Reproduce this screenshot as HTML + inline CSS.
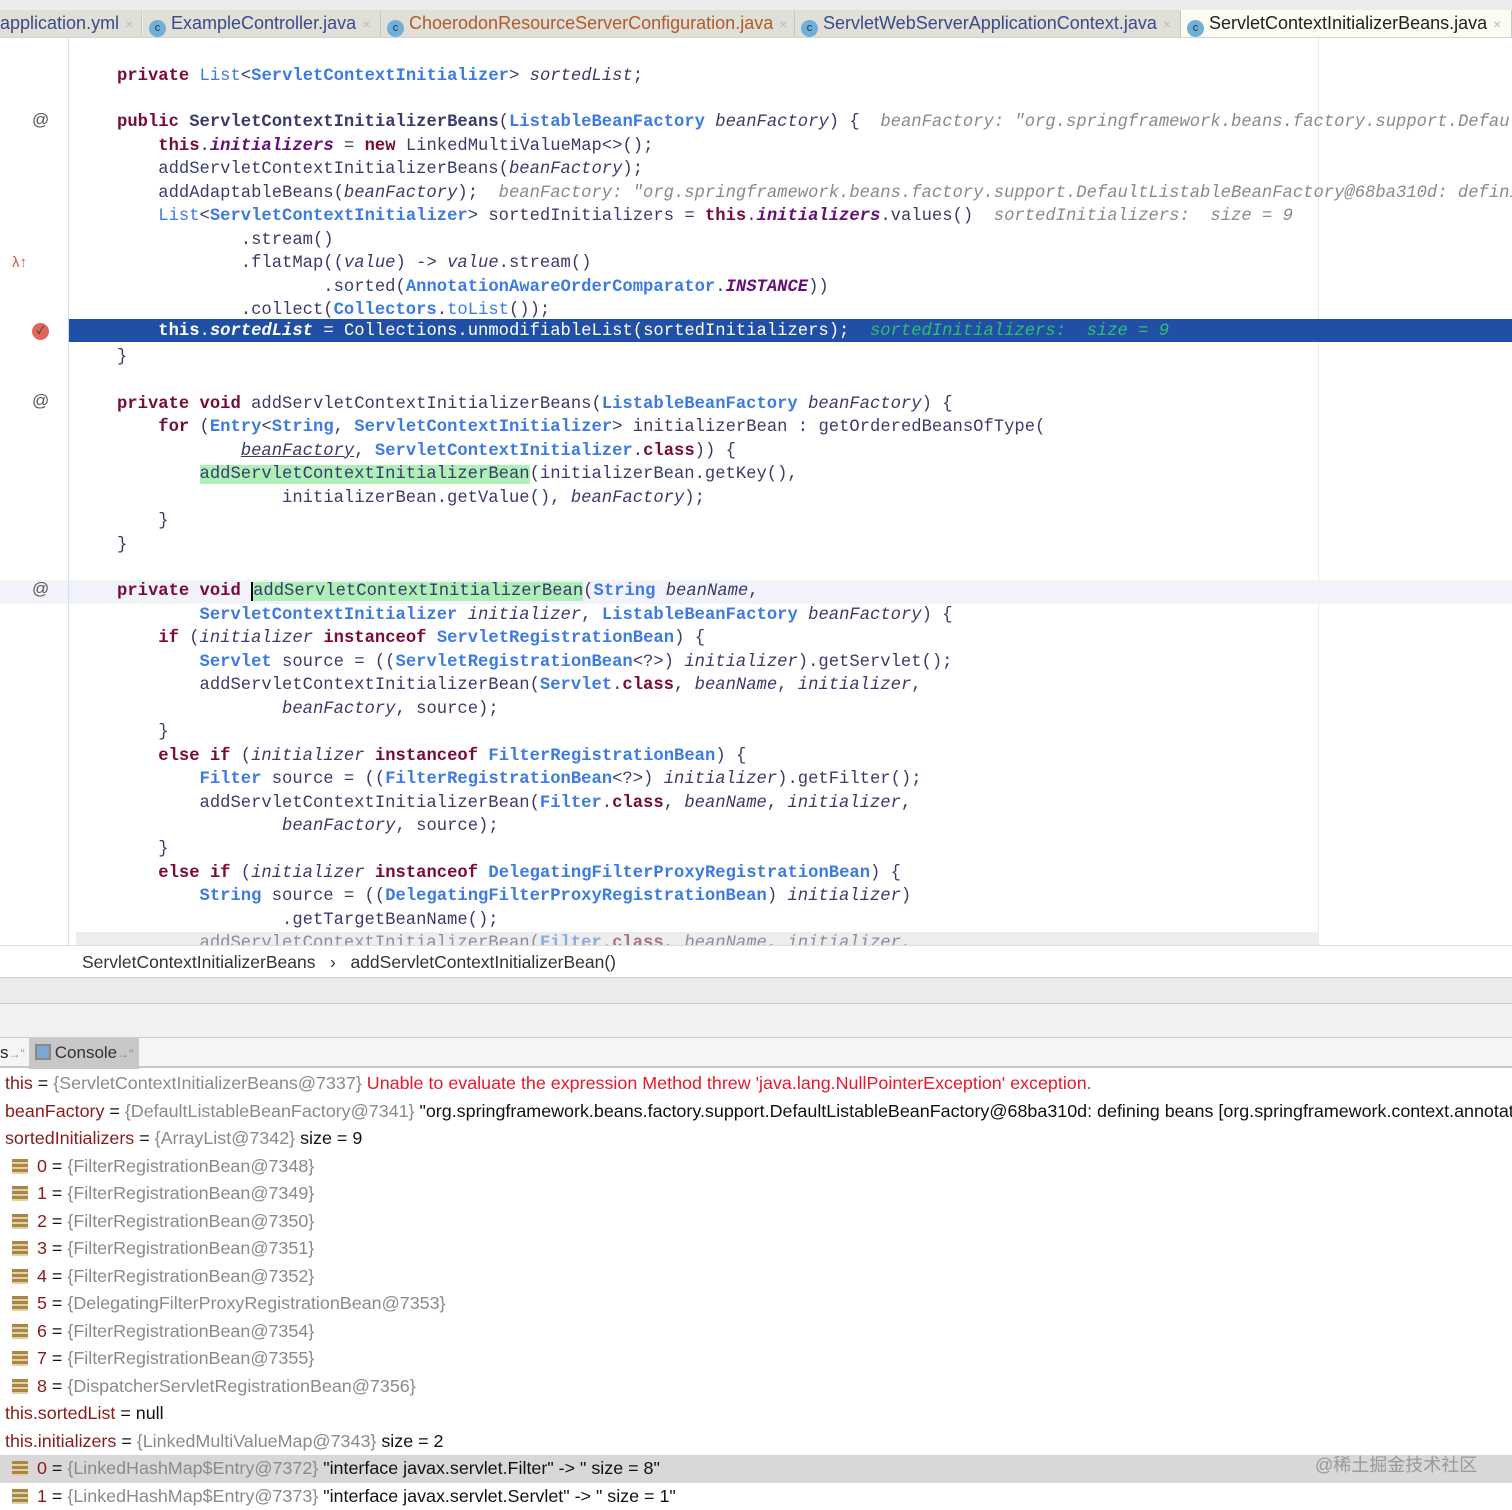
<!DOCTYPE html>
<html><head><meta charset="utf-8"><style>
*{margin:0;padding:0;box-sizing:border-box}
body{width:1512px;height:1510px;overflow:hidden;background:#fff;position:relative;font-family:"Liberation Sans","Noto Sans CJK SC",sans-serif}
.tabs{position:absolute;left:0;top:0;width:1512px;height:38px;background:#ececec;border-bottom:2px solid #d4d4d4}
.tab{position:absolute;top:10px;height:27px;background:#e0e0d8;border-right:1px solid #c8c8c8;font-size:18px;line-height:26px;color:#3a4a8a;white-space:nowrap;padding-left:6px}
.tab .c{display:inline-block;width:17px;height:17px;border-radius:50%;background:#6fb0d8;color:#234;font-size:11px;line-height:17px;text-align:center;vertical-align:-2px;margin-right:5px}
.tab .x{color:#bbb;font-size:14px;margin-left:6px}
.code{position:absolute;left:0;top:38px;width:1512px;height:907px;overflow:hidden;background:#fff}
.gut{position:absolute;left:68px;top:0;width:1px;height:907px;background:#cfe0f0}
.rm{position:absolute;left:1318px;top:0;width:1px;height:907px;background:#ececec}
.ln{position:absolute;left:0;width:1512px;height:23.45px;font-family:"Liberation Mono",monospace;font-size:17.2px;line-height:23.45px;white-space:pre;color:#3b3b6b;padding-left:117px;margin-top:2px}
.k{color:#7a0a3a;font-weight:bold}
.t{color:#3d7be0}
.tb{color:#3d7be0;font-weight:bold}
.i{font-style:italic}
.f{color:#660e7a;font-weight:bold;font-style:italic}
.g{color:#8a8a8a;font-style:italic}
.gr{color:#2fbf6f;font-style:italic}
.hl{background:#214fa5;color:#fff}
.hl .k,.hl .f{color:#fff}
.cur{background:#f2f2fa}
.mk{background:#aef0b8}
.at{position:absolute;left:32px;font-size:17px;color:#555}
.bc{position:absolute;left:0;top:945px;width:1512px;height:32px;background:#fff;border-top:1px solid #ddd;font-size:17.5px;color:#333;line-height:32px;padding-left:82px}
.band1{position:absolute;left:0;top:977px;width:1512px;height:27px;background:#ebebeb;border-top:1px solid #ccc;border-bottom:1px solid #ccc}
.band2{position:absolute;left:0;top:1004px;width:1512px;height:34px;background:#f2f2f2;border-bottom:1px solid #ccc}
.tbar{position:absolute;left:0;top:1038px;width:1512px;height:30px;background:#f5f5f5;border-bottom:2px solid #c8c8c8;font-size:17px;line-height:30px}
.var{position:absolute;left:0;width:1512px;height:27.5px;font-size:17.9px;line-height:27.5px;color:#111;white-space:nowrap}
.n{color:#8b1a1a}
.v{color:#8a8a8a}
.ic{display:inline-block;width:16px;height:15px;vertical-align:-2px;margin:0 9px 0 12px;background:repeating-linear-gradient(#a8864a 0 3px,#e2d0a0 3px 5px)}
</style></head><body>
<div class="tabs">
<div class="tab" style="left:-6px;width:148px;color:#3a4a8a">application.yml<span class="x">×</span></div>
<div class="tab" style="left:143px;width:238px"><span class="c">c</span>ExampleController.java<span class="x">×</span></div>
<div class="tab" style="left:381px;width:414px;color:#b25a2a"><span class="c">c</span>ChoerodonResourceServerConfiguration.java<span class="x">×</span></div>
<div class="tab" style="left:795px;width:386px"><span class="c">c</span>ServletWebServerApplicationContext.java<span class="x">×</span></div>
<div class="tab" style="left:1181px;width:331px;background:#fcfcf2;color:#222"><span class="c">c</span>ServletContextInitializerBeans.java<span class="x">×</span></div>
</div>
<div class="code">
<div class="rm"></div>
<div class="ln" style="top:24.5px"><span class="k">private</span> <span class="t">List</span>&lt;<span class="tb">ServletContextInitializer</span>&gt; <span class="i">sortedList</span>;</div>
<div class="ln" style="top:71.4px"><span class="k">public</span> <b>ServletContextInitializerBeans</b>(<span class="tb">ListableBeanFactory</span> <span class="i">beanFactory</span>) {  <span class="g">beanFactory: "org.springframework.beans.factory.support.DefaultListableBeanFactory@68ba310d</span></div>
<div class="ln" style="top:94.9px">    <span class="k">this</span>.<span class="f">initializers</span> = <span class="k">new</span> LinkedMultiValueMap&lt;&gt;();</div>
<div class="ln" style="top:118.3px">    addServletContextInitializerBeans(<span class="i">beanFactory</span>);</div>
<div class="ln" style="top:141.8px">    addAdaptableBeans(<span class="i">beanFactory</span>);  <span class="g">beanFactory: "org.springframework.beans.factory.support.DefaultListableBeanFactory@68ba310d: defining</span></div>
<div class="ln" style="top:165.2px">    <span class="t">List</span>&lt;<span class="tb">ServletContextInitializer</span>&gt; sortedInitializers = <span class="k">this</span>.<span class="f">initializers</span>.values()  <span class="g">sortedInitializers:  size = 9</span></div>
<div class="ln" style="top:188.7px">            .stream()</div>
<div class="ln" style="top:212.1px">            .flatMap((<span class="i">value</span>) -&gt; <span class="i">value</span>.stream()</div>
<div class="ln" style="top:235.6px">                    .sorted(<span class="tb">AnnotationAwareOrderComparator</span>.<span class="f">INSTANCE</span>))</div>
<div class="ln" style="top:259px">            .collect(<span class="tb">Collectors</span>.<span class="t">toList</span>());</div>
<div class="ln hl" style="top:280.5px;left:68px;padding-left:49px;margin-top:0;padding-top:2px;height:23.45px;line-height:21.45px">    <span class="k">this</span>.<span class="f">sortedList</span> = Collections.unmodifiableList(sortedInitializers);  <span class="gr">sortedInitializers:  size = 9</span></div>
<div class="ln" style="top:305.9px">}</div>
<div class="ln" style="top:352.8px"><span class="k">private void</span> addServletContextInitializerBeans(<span class="tb">ListableBeanFactory</span> <span class="i">beanFactory</span>) {</div>
<div class="ln" style="top:376.3px">    <span class="k">for</span> (<span class="tb">Entry</span>&lt;<span class="tb">String</span>, <span class="tb">ServletContextInitializer</span>&gt; initializerBean : getOrderedBeansOfType(</div>
<div class="ln" style="top:399.7px">            <span class="i" style="text-decoration:underline">beanFactory</span>, <span class="tb">ServletContextInitializer</span>.<span class="k">class</span>)) {</div>
<div class="ln" style="top:423.2px">        <span class="mk">addServletContextInitializerBean</span>(initializerBean.getKey(),</div>
<div class="ln" style="top:446.6px">                initializerBean.getValue(), <span class="i">beanFactory</span>);</div>
<div class="ln" style="top:470.1px">    }</div>
<div class="ln" style="top:493.5px">}</div>
<div class="ln cur" style="top:540.4px"><span class="k">private void</span> <span class="mk" style="border-left:2px solid #000">addServletContextInitializerBean</span>(<span class="tb">String</span> <span class="i">beanName</span>,</div>
<div class="ln" style="top:563.9px">        <span class="tb">ServletContextInitializer</span> <span class="i">initializer</span>, <span class="tb">ListableBeanFactory</span> <span class="i">beanFactory</span>) {</div>
<div class="ln" style="top:587.3px">    <span class="k">if</span> (<span class="i">initializer</span> <span class="k">instanceof</span> <span class="tb">ServletRegistrationBean</span>) {</div>
<div class="ln" style="top:610.8px">        <span class="tb">Servlet</span> source = ((<span class="tb">ServletRegistrationBean</span>&lt;?&gt;) <span class="i">initializer</span>).getServlet();</div>
<div class="ln" style="top:634.2px">        addServletContextInitializerBean(<span class="tb">Servlet</span>.<span class="k">class</span>, <span class="i">beanName</span>, <span class="i">initializer</span>,</div>
<div class="ln" style="top:657.7px">                <span class="i">beanFactory</span>, source);</div>
<div class="ln" style="top:681.1px">    }</div>
<div class="ln" style="top:704.6px">    <span class="k">else if</span> (<span class="i">initializer</span> <span class="k">instanceof</span> <span class="tb">FilterRegistrationBean</span>) {</div>
<div class="ln" style="top:728px">        <span class="tb">Filter</span> source = ((<span class="tb">FilterRegistrationBean</span>&lt;?&gt;) <span class="i">initializer</span>).getFilter();</div>
<div class="ln" style="top:751.5px">        addServletContextInitializerBean(<span class="tb">Filter</span>.<span class="k">class</span>, <span class="i">beanName</span>, <span class="i">initializer</span>,</div>
<div class="ln" style="top:774.9px">                <span class="i">beanFactory</span>, source);</div>
<div class="ln" style="top:798.4px">    }</div>
<div class="ln" style="top:821.8px">    <span class="k">else if</span> (<span class="i">initializer</span> <span class="k">instanceof</span> <span class="tb">DelegatingFilterProxyRegistrationBean</span>) {</div>
<div class="ln" style="top:845.3px">        <span class="tb">String</span> source = ((<span class="tb">DelegatingFilterProxyRegistrationBean</span>) <span class="i">initializer</span>)</div>
<div class="ln" style="top:868.7px">                .getTargetBeanName();</div>
<div class="ln" style="top:892.2px">        addServletContextInitializerBean(<span class="tb">Filter</span>.<span class="k">class</span>, <span class="i">beanName</span>, <span class="i">initializer</span>,</div>
<div style="position:absolute;left:76px;top:894px;width:1242px;height:13px;background:rgba(220,220,220,.5)"></div>
<div class="gut"></div>
<div class="at" style="top:72px">@</div>
<div class="at" style="top:353px">@</div>
<div class="at" style="top:541px">@</div>
<div style="position:absolute;left:12px;top:216px;color:#d9534f;font-size:15px">λ↑</div>
<div style="position:absolute;left:32px;top:285px;width:17px;height:17px;border-radius:50%;background:#e0665a;color:#333;font-size:11px;text-align:center;line-height:17px">✓</div>
</div>
<div class="bc">ServletContextInitializerBeans &nbsp;&nbsp;›&nbsp;&nbsp; addServletContextInitializerBean()</div>
<div class="band1"></div>
<div class="band2"></div>
<div class="tbar"><span style="color:#222">s</span><span style="color:#999;font-size:12px">→"</span><span style="display:inline-block;background:#c8c8c8;padding:0 6px;margin-left:4px;color:#333"><span style="display:inline-block;width:16px;height:16px;background:#7aa8d0;border:2px solid #888;vertical-align:-2px;margin-right:4px"></span>Console<span style="color:#888;font-size:12px">→"</span></span></div>
<div class="var" style="top:1070px">&nbsp;<span class="n">this</span> = <span class="v">{ServletContextInitializerBeans@7337}</span> <span style="color:#e8182a">Unable to evaluate the expression Method threw 'java.lang.NullPointerException' exception.</span></div>
<div class="var" style="top:1097.5px">&nbsp;<span class="n">beanFactory</span> = <span class="v">{DefaultListableBeanFactory@7341}</span> "org.springframework.beans.factory.support.DefaultListableBeanFactory@68ba310d: defining beans [org.springframework.context.annotation</div>
<div class="var" style="top:1125px">&nbsp;<span class="n">sortedInitializers</span> = <span class="v">{ArrayList@7342}</span>  size = 9</div>
<div class="var" style="top:1152.5px"><span class="ic"></span><span class="n">0</span> = <span class="v">{FilterRegistrationBean@7348}</span></div>
<div class="var" style="top:1180px"><span class="ic"></span><span class="n">1</span> = <span class="v">{FilterRegistrationBean@7349}</span></div>
<div class="var" style="top:1207.5px"><span class="ic"></span><span class="n">2</span> = <span class="v">{FilterRegistrationBean@7350}</span></div>
<div class="var" style="top:1235px"><span class="ic"></span><span class="n">3</span> = <span class="v">{FilterRegistrationBean@7351}</span></div>
<div class="var" style="top:1262.5px"><span class="ic"></span><span class="n">4</span> = <span class="v">{FilterRegistrationBean@7352}</span></div>
<div class="var" style="top:1290px"><span class="ic"></span><span class="n">5</span> = <span class="v">{DelegatingFilterProxyRegistrationBean@7353}</span></div>
<div class="var" style="top:1317.5px"><span class="ic"></span><span class="n">6</span> = <span class="v">{FilterRegistrationBean@7354}</span></div>
<div class="var" style="top:1345px"><span class="ic"></span><span class="n">7</span> = <span class="v">{FilterRegistrationBean@7355}</span></div>
<div class="var" style="top:1372.5px"><span class="ic"></span><span class="n">8</span> = <span class="v">{DispatcherServletRegistrationBean@7356}</span></div>
<div class="var" style="top:1400px">&nbsp;<span class="n">this.sortedList</span> = null</div>
<div class="var" style="top:1427.5px">&nbsp;<span class="n">this.initializers</span> = <span class="v">{LinkedMultiValueMap@7343}</span>  size = 2</div>
<div class="var" style="top:1455px;background:#d8d8d8"><span class="ic"></span><span class="n">0</span> = <span class="v">{LinkedHashMap$Entry@7372}</span> "interface javax.servlet.Filter" -&gt; " size = 8"</div>
<div class="var" style="top:1482.5px"><span class="ic"></span><span class="n">1</span> = <span class="v">{LinkedHashMap$Entry@7373}</span> "interface javax.servlet.Servlet" -&gt; " size = 1"</div>
<div style="position:absolute;left:1315px;top:1451px;font-size:18px;color:#999;font-family:'Liberation Sans','Noto Sans CJK SC',sans-serif">@稀土掘金技术社区</div>
</body></html>
